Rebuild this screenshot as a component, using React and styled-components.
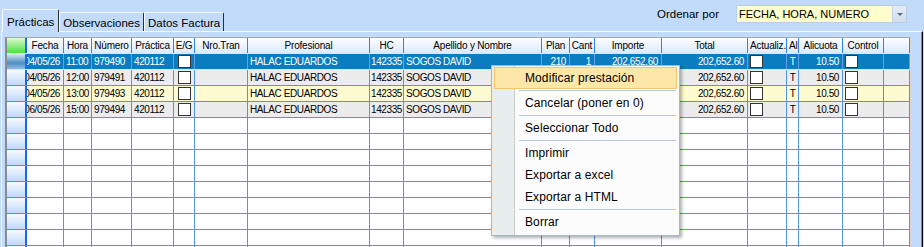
import styled, { createGlobalStyle } from "styled-components";

const GlobalStyle = createGlobalStyle`
  html, body {
    margin: 0;
    padding: 0;
    overflow: hidden;
    background: #c2dbfa;
  }
  * {
    box-sizing: border-box;
  }
`;

const COLS = [20, 37, 28, 40, 42, 21, 53, 122, 34, 138, 28, 25, 67, 86, 39, 12, 44, 41, 26];
const TEMPLATE = COLS.map((w) => w + "px").join(" ");

const Page = styled.div`
  position: relative;
  width: 924px;
  height: 247px;
  overflow: hidden;
  display: flex;
  flex-direction: column;
  background: #c2dbfa;
  font-family: "Liberation Sans", Arial, sans-serif;
  color: #000;
`;

const TopBar = styled.div`
  height: 31px;
  display: flex;
  align-items: flex-end;
  padding-left: 2px;
`;

const Tab = styled.div`
  position: relative;
  z-index: ${(p) => (p.$active ? 2 : 1)};
  height: ${(p) => (p.$active ? "23px" : "19px")};
  margin-bottom: ${(p) => (p.$active ? "-1px" : "0")};
  padding: ${(p) => (p.$active ? "2px 4px 0 4px" : "2px 3px 0 3px")};
  background: #c2dbfa;
  border-top: 1px solid #f4f8ff;
  border-left: 1px solid #f4f8ff;
  border-right: 1px solid #303030;
  border-radius: 2px 2px 0 0;
  font-size: 11.5px;
  white-space: nowrap;
  display: flex;
  align-items: center;
`;

const OrderBy = styled.div`
  margin-left: auto;
  margin-right: 17px;
  align-self: flex-start;
  margin-top: 5px;
  display: flex;
  align-items: center;
  gap: 17px;
  font-size: 11.5px;
`;

const Combo = styled.div`
  width: 171px;
  height: 18px;
  border: 1px solid #b9cde4;
  background: #fffcce;
  display: flex;
  align-items: center;
  padding-left: 2px;
  font-size: 11px;
`;

const ComboText = styled.span`
  flex: 1;
`;

const ComboButton = styled.div`
  width: 14px;
  height: 16px;
  background: linear-gradient(#e4ecf6, #d2deec);
  border-left: 1px solid #c4d4e6;
  display: flex;
  align-items: center;
  justify-content: center;
  &::after {
    content: "";
    border-left: 3px solid transparent;
    border-right: 3px solid transparent;
    border-top: 3px solid #5a7090;
  }
`;

const Panel = styled.div`
  flex: 1;
  margin-left: 1px;
  margin-right: 1px;
  border-top: 1px solid #f4f8ff;
  border-left: 1px solid #f4f8ff;
  border-right: 1px solid #000;
  box-shadow: inset -1px 0 0 #7a8a9a;
  padding: 5px 11px 0 3px;
  display: flex;
  min-height: 0;
`;

const Grid = styled.div`
  flex: 1;
  border-top: 1px solid #a8a8a8;
  border-left: 2px solid #8c8c8c;
  border-right: 1px solid #d8d8d8;
  background: #fff;
  overflow: hidden;
  font-size: 10px;
  letter-spacing: -0.4px;
`;

const rowBg = {
  header: "linear-gradient(#fdfeff, #dce9fc)",
  selected: "#0a7cc0",
  grey: "#ececec",
  yellow: "#fffbd0",
  empty: "#ffffff",
};

const Row = styled.div`
  display: grid;
  grid-template-columns: ${TEMPLATE};
  height: 16px;
  background: ${(p) => rowBg[p.$variant]};
  color: ${(p) => (p.$variant === "selected" ? "#fff" : "#000")};
  border-bottom: 1px solid
    ${(p) => (p.$variant === "header" || p.$variant === "selected" ? "#f6f07a" : "#4f95f0")};
`;

const Cell = styled.div`
  display: flex;
  align-items: center;
  justify-content: ${(p) =>
    p.$align === "right" ? "flex-end" : p.$align === "center" ? "center" : "flex-start"};
  padding: 0 ${(p) => (p.$tight ? "1px" : p.$align === "right" ? "3px" : "2px")};
  overflow: hidden;
  white-space: nowrap;
  border-right: 1px solid ${(p) => (p.$head ? "#2e84f6" : p.$sel ? "#5fa2e6" : "#4f95f0")};
`;

const HeadCell = styled(Cell)`
  justify-content: ${(p) => (p.$clip ? "flex-start" : "center")};
  padding: 0 2px;
  letter-spacing: -0.2px;
`;

const Indicator = styled.div`
  border-right: 2px solid #1669f2;
  background: ${(p) =>
    p.$head
      ? "linear-gradient(#dafccc, #4fdc48)"
      : p.$sel
      ? "linear-gradient(#d6e6f4, #4e8cc2 60%, #8fbde2)"
      : "linear-gradient(#f6faff, #c2d9f8)"};
`;

const Check = styled.span`
  width: 13px;
  height: 13px;
  background: #fff;
  border: 1px solid #333;
  flex: none;
`;

const Menu = styled.div`
  position: absolute;
  left: 491px;
  top: 65px;
  width: 189px;
  z-index: 10;
  padding: 1px 1px 2px 1px;
  border: 1px solid #a9b8c8;
  box-shadow: 2px 2px 3px rgba(0, 0, 0, 0.3);
  background: linear-gradient(to right, #e8eded 0 22px, #c6cece 22px 23px, #fcfcfc 23px);
  font-size: 12px;
  letter-spacing: 0.1px;
`;

const MenuItem = styled.div`
  height: 22px;
  display: flex;
  align-items: center;
  padding-left: 30px;
  margin: 0 1px;
  border: 1px solid ${(p) => (p.$hot ? "#f3c56c" : "transparent")};
  background: ${(p) => (p.$hot ? "#fde7a8" : "transparent")};
`;

const Separator = styled.div`
  height: 3px;
  margin-left: 26px;
  margin-right: 2px;
  display: flex;
  align-items: center;
  &::after {
    content: "";
    flex: 1;
    height: 1px;
    background: #b3c9e4;
  }
`;

const headers = [
  "Fecha", "Hora", "Número", "Práctica", "E/G", "Nro.Tran", "Profesional", "HC",
  "Apellido y Nombre", "Plan", "Cant", "Importe", "Total", "Actualiz.", "Al", "Alicuota",
  "Control", "",
];

const data = [
  { fecha: "04/05/26", hora: "11:00", numero: "979490", v: "selected" },
  { fecha: "04/05/26", hora: "12:00", numero: "979491", v: "grey" },
  { fecha: "04/05/26", hora: "13:00", numero: "979493", v: "yellow" },
  { fecha: "06/05/26", hora: "15:00", numero: "979494", v: "grey" },
];

function DataRow({ r }) {
  const sel = r.v === "selected";
  return (
    <Row $variant={r.v}>
      <Indicator $sel={sel} />
      <Cell $sel={sel} $align="right">{r.fecha}</Cell>
      <Cell $sel={sel}>{r.hora}</Cell>
      <Cell $sel={sel}>{r.numero}</Cell>
      <Cell $sel={sel}>420112</Cell>
      <Cell $sel={sel} $align="center"><Check /></Cell>
      <Cell $sel={sel} />
      <Cell $sel={sel}>HALAC EDUARDOS</Cell>
      <Cell $sel={sel} $tight>142335</Cell>
      <Cell $sel={sel}>SOGOS DAVID</Cell>
      <Cell $sel={sel} $align="right">210</Cell>
      <Cell $sel={sel} $align="right">1</Cell>
      <Cell $sel={sel} $align="right">202,652.60</Cell>
      <Cell $sel={sel} $align="right">202,652.60</Cell>
      <Cell $sel={sel}><Check /></Cell>
      <Cell $sel={sel} $align="center">T</Cell>
      <Cell $sel={sel} $align="right">10.50</Cell>
      <Cell $sel={sel}><Check /></Cell>
      <Cell $sel={sel} />
    </Row>
  );
}

function EmptyRow() {
  return (
    <Row $variant="empty">
      <Indicator />
      {COLS.slice(1).map((_, i) => (
        <Cell key={i} />
      ))}
    </Row>
  );
}

export default function App() {
  return (
    <>
      <GlobalStyle />
      <Page>
        <TopBar>
          <Tab $active>Prácticas</Tab>
          <Tab>Observaciones</Tab>
          <Tab>Datos Factura</Tab>
          <OrderBy>
            Ordenar por
            <Combo>
              <ComboText>FECHA, HORA, NUMERO</ComboText>
              <ComboButton />
            </Combo>
          </OrderBy>
        </TopBar>
        <Panel>
          <Grid>
            <Row $variant="header">
              <Indicator $head />
              {headers.map((h, i) => (
                <HeadCell key={i} $head $clip={h === "Actualiz." || h === "Al"}>
                  {h}
                </HeadCell>
              ))}
            </Row>
            {data.map((r, i) => (
              <DataRow key={i} r={r} />
            ))}
            {Array.from({ length: 9 }).map((_, i) => (
              <EmptyRow key={i} />
            ))}
          </Grid>
        </Panel>
        <Menu>
          <MenuItem $hot>Modificar prestación</MenuItem>
          <Separator />
          <MenuItem>Cancelar (poner en 0)</MenuItem>
          <Separator />
          <MenuItem>Seleccionar Todo</MenuItem>
          <Separator />
          <MenuItem>Imprimir</MenuItem>
          <MenuItem>Exportar a excel</MenuItem>
          <MenuItem>Exportar a HTML</MenuItem>
          <Separator />
          <MenuItem>Borrar</MenuItem>
        </Menu>
      </Page>
    </>
  );
}
